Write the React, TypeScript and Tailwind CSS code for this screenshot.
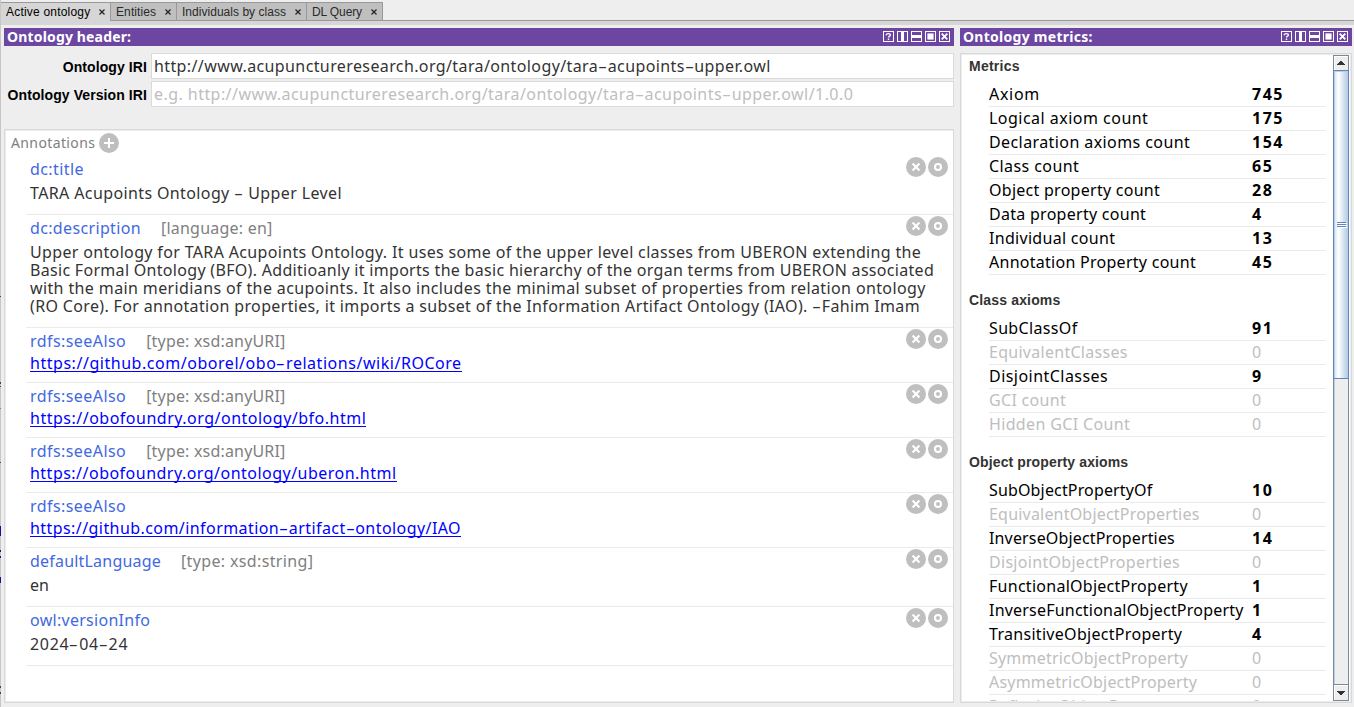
import { Fragment } from "react";

const sans = "font-['Noto_Sans','Lucida_Grande',sans-serif]";
const helv = "font-['Liberation_Sans',Arial,sans-serif]";

type Tab = { label: string; width: string; tracking: string; active?: boolean };

const tabs: Tab[] = [
  { label: "Active ontology", width: "w-[110px]", tracking: "tracking-[0.2px]", active: true },
  { label: "Entities", width: "w-[66px]", tracking: "tracking-[0.1px]" },
  { label: "Individuals by class", width: "w-[130px]", tracking: "tracking-[0.03px]" },
  { label: "DL Query", width: "w-[76px]", tracking: "tracking-[-0.12px]" },
];

type Line = { text: string; tracking: string };
type Annotation = {
  name: Line;
  type?: Line;
  value?: Line[];
  link?: Line;
};

const seeAlso: Line = { text: "rdfs:seeAlso", tracking: "tracking-[0.43px]" };
const anyUri: Line = { text: "[type: xsd:anyURI]", tracking: "tracking-[0.18px]" };

const annotations: Annotation[] = [
  {
    name: { text: "dc:title", tracking: "tracking-[0.42px]" },
    value: [{ text: "TARA Acupoints Ontology - Upper Level", tracking: "tracking-[0.38px]" }],
  },
  {
    name: { text: "dc:description", tracking: "tracking-[0.35px]" },
    type: { text: "[language: en]", tracking: "tracking-[0.22px]" },
    value: [
      {
        text: "Upper ontology for TARA Acupoints Ontology. It uses some of the upper level classes from UBERON extending the",
        tracking: "tracking-[0.345px]",
      },
      {
        text: "Basic Formal Ontology (BFO). Additioanly it imports the basic hierarchy of the organ terms from UBERON associated",
        tracking: "tracking-[0.305px]",
      },
      {
        text: "with the main meridians of the acupoints. It also includes the minimal subset of properties from relation ontology",
        tracking: "tracking-[0.38px]",
      },
      {
        text: "(RO Core). For annotation properties, it imports a subset of the Information Artifact Ontology (IAO). -Fahim Imam",
        tracking: "tracking-[0.345px]",
      },
    ],
  },
  {
    name: seeAlso,
    type: anyUri,
    link: { text: "https://github.com/oborel/obo-relations/wiki/ROCore", tracking: "tracking-[0.535px]" },
  },
  {
    name: seeAlso,
    type: anyUri,
    link: { text: "https://obofoundry.org/ontology/bfo.html", tracking: "tracking-[0.5px]" },
  },
  {
    name: seeAlso,
    type: anyUri,
    link: { text: "https://obofoundry.org/ontology/uberon.html", tracking: "tracking-[0.48px]" },
  },
  {
    name: seeAlso,
    link: { text: "https://github.com/information-artifact-ontology/IAO", tracking: "tracking-[0.43px]" },
  },
  {
    name: { text: "defaultLanguage", tracking: "tracking-[0.2px]" },
    type: { text: "[type: xsd:string]", tracking: "tracking-[0.36px]" },
    value: [{ text: "en", tracking: "tracking-[0px]" }],
  },
  {
    name: { text: "owl:versionInfo", tracking: "tracking-[0.28px]" },
    value: [{ text: "2024-04-24", tracking: "tracking-[0.67px]" }],
  },
];

type Metric = [label: string, value: number, tracking: string];

const sections: { title: string; tracking: string; rows: Metric[] }[] = [
  {
    title: "Metrics",
    tracking: "tracking-[0.25px]",
    rows: [
      ["Axiom", 745, "tracking-[0.7px]"],
      ["Logical axiom count", 175, "tracking-[0.48px]"],
      ["Declaration axioms count", 154, "tracking-[0.41px]"],
      ["Class count", 65, "tracking-[0.42px]"],
      ["Object property count", 28, "tracking-[0.27px]"],
      ["Data property count", 4, "tracking-[0.28px]"],
      ["Individual count", 13, "tracking-[0.3px]"],
      ["Annotation Property count", 45, "tracking-[0.27px]"],
    ],
  },
  {
    title: "Class axioms",
    tracking: "tracking-[0.16px]",
    rows: [
      ["SubClassOf", 91, "tracking-[0.35px]"],
      ["EquivalentClasses", 0, "tracking-[0.28px]"],
      ["DisjointClasses", 9, "tracking-[0.46px]"],
      ["GCI count", 0, "tracking-[0.32px]"],
      ["Hidden GCI Count", 0, "tracking-[0.35px]"],
    ],
  },
  {
    title: "Object property axioms",
    tracking: "tracking-[0.13px]",
    rows: [
      ["SubObjectPropertyOf", 10, "tracking-[0.15px]"],
      ["EquivalentObjectProperties", 0, "tracking-[0.2px]"],
      ["InverseObjectProperties", 14, "tracking-[0.15px]"],
      ["DisjointObjectProperties", 0, "tracking-[0.3px]"],
      ["FunctionalObjectProperty", 1, "tracking-[0.27px]"],
      ["InverseFunctionalObjectProperty", 1, "tracking-[0.21px]"],
      ["TransitiveObjectProperty", 4, "tracking-[0.3px]"],
      ["SymmetricObjectProperty", 0, "tracking-[0.21px]"],
      ["AsymmetricObjectProperty", 0, "tracking-[0.21px]"],
      ["ReflexiveObjectProperty", 0, "tracking-[0.26px]"],
    ],
  },
];

/** Text with hyphens stretched to the wide form of the Lucida face. */
function Wide({ text }: { text: string }) {
  return (
    <>
      {text.split("-").map((part, i) => (
        <Fragment key={i}>
          {i > 0 && <span className="mx-[2px] inline-block scale-x-[1.75]">-</span>}
          {part}
        </Fragment>
      ))}
    </>
  );
}

function ViewIcons() {
  return (
    <svg width="67" height="11" viewBox="0 0 67 11" className="shrink-0" shapeRendering="crispEdges">
      {[0, 14, 28, 42, 56].map((x) => (
        <rect key={x} x={x + 0.5} y="0.5" width="10" height="10" fill="none" stroke="#fff" />
      ))}
      <path
        d="M3.3 4.2V3.6Q3.6 2.6 5.4 2.6Q7.4 2.6 7.4 4Q7.4 4.8 6.2 5.4Q5.5 5.8 5.5 6.6M5.5 7.6V9"
        fill="none"
        stroke="#fff"
        strokeWidth="1.4"
        shapeRendering="auto"
      />
      <rect x="18" y="1" width="3" height="9" fill="#fff" />
      <rect x="29" y="4" width="9" height="3" fill="#fff" />
      <rect x="44.4" y="2.4" width="6.2" height="6.2" fill="#fff" shapeRendering="auto" />
      <path d="M58.7 2.7L64.3 8.3M64.3 2.7L58.7 8.3" stroke="#fff" strokeWidth="1.9" shapeRendering="auto" />
    </svg>
  );
}

function ViewTitle({ text, tracking }: { text: string; tracking: string }) {
  return (
    <div className="flex h-[18px] shrink-0 items-start justify-between bg-[#6c46a1] pr-1 pl-[3px]">
      <span className={`${sans} ${tracking} text-[14px] leading-[18px] font-bold text-white`}>{text}</span>
      <div className="flex pt-[3px]">
        <ViewIcons />
      </div>
    </div>
  );
}

function RoundIcon({ kind }: { kind: "add" | "delete" | "edit" }) {
  return (
    <svg width="20" height="20" viewBox="0 0 20 20" className="shrink-0" fill="none" stroke="#fff">
      <circle cx="10" cy="10" r="10" fill="#bfbfbf" stroke="none" />
      {kind === "add" && <path d="M10 5V15M5 10H15" strokeWidth="2" />}
      {kind === "delete" && <path d="M6.6 6.6L13.4 13.4M13.4 6.6L6.6 13.4" strokeWidth="2.1" />}
      {kind === "edit" && <circle cx="10" cy="10" r="3" strokeWidth="2.1" />}
    </svg>
  );
}

function Field({ label, text, tracking, muted, labelTracking }: {
  label: string;
  text: string;
  tracking: string;
  labelTracking: string;
  muted?: boolean;
}) {
  return (
    <div className="flex h-[26px]">
      <div
        className={`${helv} ${labelTracking} w-[147px] shrink-0 pr-[4px] text-right text-[14px] leading-[28px] font-bold whitespace-nowrap text-black`}
      >
        {label}
      </div>
      <div
        className={`${sans} ${tracking} min-w-0 flex-1 border border-[#dadada] bg-white pl-[2px] text-[16px] leading-[24px] whitespace-nowrap ${muted ? "text-[#bebebe]" : "text-[#333]"}`}
      >
        <Wide text={text} />
      </div>
    </div>
  );
}

function AnnotationRow({ a }: { a: Annotation }) {
  return (
    <div className="ml-5 flex justify-between border-b border-[#ebebeb] pr-[5px] pl-1 text-[16px] whitespace-nowrap">
      <div className={`w-[876px] pt-px ${a.link ? "pb-[10px]" : "pb-[12px]"}`}>
        <div className="flex gap-5 leading-[24px]">
          <span className={`${a.name.tracking} text-[#4169e1]`}>{a.name.text}</span>
          {a.type && <span className={`${a.type.tracking} text-[#808080]`}>{a.type.text}</span>}
        </div>
        {a.value && (
          <div className="mt-[3px] leading-[18px] text-[#333]">
            {a.value.map((l) => (
              <div key={l.text} className={`${l.tracking} h-[18px]`}>
                <Wide text={l.text} />
              </div>
            ))}
          </div>
        )}
        {a.link && (
          <div className="mt-px flex">
            <a className={`${a.link.tracking} block h-[18px] border-b border-[#0000ff] leading-[18px] text-[#0000ff]`}>
              <Wide text={a.link.text} />
            </a>
          </div>
        )}
      </div>
      <div className="flex gap-[2px] pt-px">
        <RoundIcon kind="delete" />
        <RoundIcon kind="edit" />
      </div>
    </div>
  );
}

function ScrollBar() {
  return (
    <svg width="16" height="646" viewBox="0 0 16 646" className="shrink-0" shapeRendering="crispEdges">
      <defs>
        <linearGradient id="thumb" x1="0" x2="1" y1="0" y2="0">
          <stop offset="0" stopColor="#dde8f3" />
          <stop offset="0.3" stopColor="#ffffff" />
          <stop offset="1" stopColor="#b8cfe5" />
        </linearGradient>
      </defs>
      <rect width="16" height="646" fill="#7a8a99" />
      <rect x="1" y="1" width="14" height="644" fill="#eeeeee" />
      <rect x="1" y="324" width="1" height="306" fill="#b8cfe5" />
      <rect x="1" y="1" width="14" height="1" fill="#fff" />
      <rect x="1" y="1" width="1" height="14" fill="#fff" />
      <path d="M8 6H9V7H10V8H11V9H12V10H4V9H5V8H6V7H7V6Z" fill="#333" />
      <rect y="15" width="16" height="309" fill="#6382bf" />
      <rect x="1" y="16" width="14" height="307" fill="#b8cfe5" />
      <rect x="2" y="17" width="12" height="306" fill="url(#thumb)" />
      {[167, 169, 171].map((y) => (
        <g key={y}>
          <rect x="5" y={y + 1} width="9" height="1" fill="#fff" />
          <rect x="4" y={y} width="9" height="1" fill="#6382bf" />
        </g>
      ))}
      <rect y="629" width="16" height="1" fill="#7a8a99" />
      <rect x="1" y="630" width="14" height="1" fill="#fff" />
      <rect x="1" y="630" width="1" height="15" fill="#fff" />
      <path d="M4 636H12V637H11V638H10V639H9V640H7V639H6V638H5V637H4Z" fill="#333" />
    </svg>
  );
}

export default function App() {
  return (
    <div className="flex h-[707px] w-[1354px] overflow-hidden bg-[#eeeeee]">
      <svg width="1" height="707" viewBox="0 0 1 707" className="shrink-0" shapeRendering="crispEdges">
        <rect width="1" height="707" fill="#c6c6c6" />
        <path d="M0 296H1V297H0ZM0 382H1V384H0ZM0 386H1V387H0ZM0 462H1V463H0ZM0 686H1V688H0ZM0 692H1V694H0Z" fill="#444" />
        <path d="M0 526H1V536H0ZM0 550H1V552H0ZM0 556H1V558H0ZM0 577H1V583H0Z" fill="#1a1288" />
        <rect y="408" width="1" height="1" fill="#9468b8" />
      </svg>
      <div className="flex min-w-0 flex-1 flex-col">
        <div className="flex h-[21px] shrink-0 pt-[2px]">
          {tabs.map((t) => (
            <div
              key={t.label}
              className={`${t.width} flex shrink-0 items-start justify-between border-t border-r border-[#999999] pr-[5px] pl-[5px] ${
                t.active ? "bg-[#d6d6d6] text-black" : "border-b bg-[#bfbfbf] text-[#2a2a2a]"
              }`}
            >
              <span className={`${helv} ${t.tracking} text-[12px] leading-[18px] whitespace-nowrap`}>{t.label}</span>
              <svg width="6" height="6" viewBox="0 0 6 6" className="mt-[6px] shrink-0">
                <path d="M0.5 0.5L5.5 5.5M5.5 0.5L0.5 5.5" stroke="#222" strokeWidth="1.2" />
              </svg>
            </div>
          ))}
          <div className="flex-1 border-b border-[#999999]" />
        </div>
        <div className="h-1 shrink-0 bg-[#d6d6d6]" />
        <div className="flex min-h-0 flex-1 gap-[6px] pt-[3px] pb-1 pl-[3px]">
          <div className="flex w-[950px] shrink-0 flex-col">
            <ViewTitle text="Ontology header:" tracking="tracking-[0.16px]" />
            <div className="mt-[7px] flex flex-col gap-[2px]">
              <Field
                label="Ontology IRI"
                labelTracking="tracking-[0.09px]"
                text="http://www.acupunctureresearch.org/tara/ontology/tara-acupoints-upper.owl"
                tracking="tracking-[0.39px]"
              />
              <Field
                label="Ontology Version IRI"
                labelTracking="tracking-[0.09px]"
                text="e.g. http://www.acupunctureresearch.org/tara/ontology/tara-acupoints-upper.owl/1.0.0"
                tracking="tracking-[0.445px]"
                muted
              />
            </div>
            <div className={`${sans} mt-[22px] flex h-[574px] flex-col border border-[#d9d9d9] bg-white`}>
              <div className="flex h-full flex-col border border-r-0 border-[#ececec]">
                <div className="flex h-[25px] shrink-0 gap-[4px] pt-[2px] pl-[5px]">
                  <span className="text-[14px] leading-[20px] tracking-[0.38px] text-[#808080]">Annotations</span>
                  <RoundIcon kind="add" />
                </div>
                {annotations.map((a, i) => (
                  <AnnotationRow key={i} a={a} />
                ))}
              </div>
            </div>
          </div>
          <div className="flex w-[392px] shrink-0 flex-col">
            <ViewTitle text="Ontology metrics:" tracking="tracking-[0.27px]" />
            <div className="mt-[7px] h-[650px] border border-[#d9d9d9] bg-white">
              <div className="flex h-full justify-between overflow-hidden border border-[#ececec] pr-px">
                <div className="flex w-[364px] flex-col gap-[14px] pl-[7px]">
                  {sections.map((s) => (
                    <div key={s.title} className="shrink-0">
                      <div className={`${helv} ${s.tracking} h-7 text-[14px] leading-[22px] font-bold text-[#333]`}>
                        {s.title}
                      </div>
                      {s.rows.map(([label, value, tracking]) => (
                        <div
                          key={label}
                          className={`${sans} ml-5 flex h-6 border-b border-[#ebebeb] text-[16px] leading-[22px] whitespace-nowrap ${
                            value === 0 ? "text-[#bebebe]" : "text-black"
                          }`}
                        >
                          <span className={`${tracking} w-[263px] shrink-0`}>{label}</span>
                          <span className={value === 0 ? "" : "font-bold tracking-[1.5px]"}>{value}</span>
                        </div>
                      ))}
                    </div>
                  ))}
                </div>
                <ScrollBar />
              </div>
            </div>
          </div>
        </div>
      </div>
    </div>
  );
}
